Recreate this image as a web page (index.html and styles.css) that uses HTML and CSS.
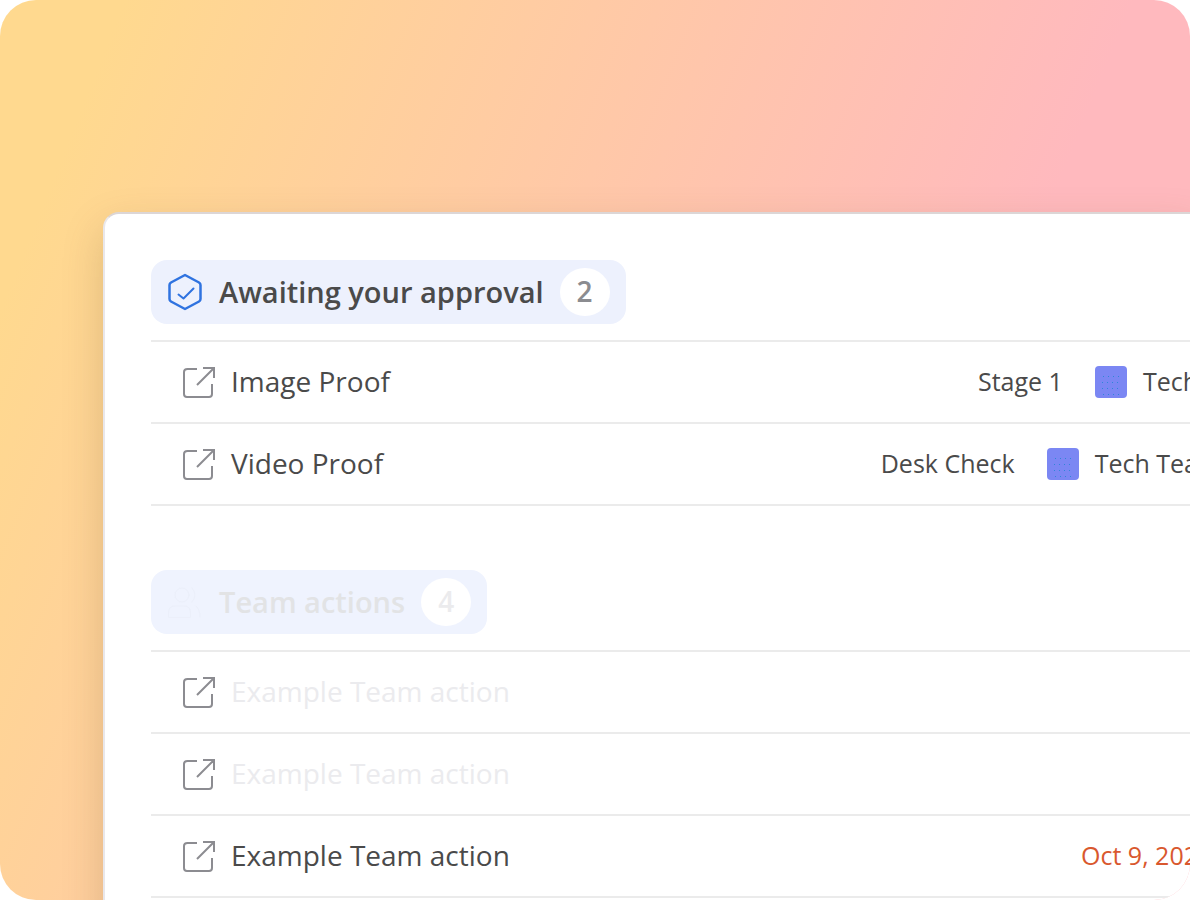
FILE: index.html
```html
<!DOCTYPE html>
<html lang="en">
<head>
  <meta charset="UTF-8">
  <meta name="viewport" content="width=device-width, initial-scale=1.0">
  <title>Awaiting your approval</title>
  <link rel="stylesheet" href="styles.css">
</head>
<body>
  <!-- Shared icons -->
  <svg class="sprite" aria-hidden="true">
    <symbol id="icon-open" viewBox="0 0 34 34">
      <path d="M15 4H5.500Q2 4 2 7V29Q2 32 5 32H27Q30 32 30 29V19" />
      <path d="M21 3H32V13M31.500 3.500L15 20" />
    </symbol>
    <symbol id="icon-dots" viewBox="0 0 32 32">
      <path d="M8 10.500H24M7 16.500H27M7 22.500H24M8 28.500H24" />
    </symbol>
  </svg>

  <main class="stage">
    <div class="card">
      <!-- Approvals -->
      <section class="section">
        <h2 class="pill">
          <svg class="pill-icon" viewBox="0 0 36 40" aria-hidden="true">
            <path d="M18 3L32 10.500Q33.500 11.500 33.500 13V27Q33.500 28.500 32 29.500L18 37L4 29.500Q2.500 28.500 2.500 27V13Q2.500 11.500 4 10.500Z" />
            <path class="tick" d="M11.500 22.500L16.500 26.500L26.500 16.500" />
          </svg>
          <span class="pill-title">Awaiting your approval</span>
          <span class="count">2</span>
        </h2>
        <ul class="rows">
          <li class="row">
            <a class="row-link" href="#"><svg class="open-icon" aria-hidden="true"><use href="#icon-open" /></svg><span class="label">Image Proof</span></a>
            <span class="meta">Stage 1</span>
            <svg class="swatch" aria-hidden="true"><use href="#icon-dots" /></svg>
            <span class="meta">Tech</span>
          </li>
          <li class="row">
            <a class="row-link" href="#"><svg class="open-icon" aria-hidden="true"><use href="#icon-open" /></svg><span class="label">Video Proof</span></a>
            <span class="meta">Desk Check</span>
            <svg class="swatch" aria-hidden="true"><use href="#icon-dots" /></svg>
            <span class="meta">Tech Tea</span>
          </li>
        </ul>
      </section>

      <!-- Team actions -->
      <section class="section">
        <h2 class="pill pill-faded">
          <svg class="pill-icon" viewBox="0 0 36 40" aria-hidden="true">
            <circle cx="15" cy="13" r="7" />
            <path d="M1.500 35V31Q1.500 24 8 24H17Q23.500 24 23.500 31V35ZM25 6Q31 13 25 20M29 24Q33 27 33 35" />
          </svg>
          <span class="pill-title">Team actions</span>
          <span class="count">4</span>
        </h2>
        <ul class="rows">
          <li class="row row-faded">
            <a class="row-link" href="#"><svg class="open-icon" aria-hidden="true"><use href="#icon-open" /></svg><span class="label">Example Team action</span></a>
          </li>
          <li class="row row-faded">
            <a class="row-link" href="#"><svg class="open-icon" aria-hidden="true"><use href="#icon-open" /></svg><span class="label">Example Team action</span></a>
          </li>
          <li class="row">
            <a class="row-link" href="#"><svg class="open-icon" aria-hidden="true"><use href="#icon-open" /></svg><span class="label">Example Team action</span></a>
            <time class="meta due">Oct 9, 202</time>
          </li>
        </ul>
      </section>
    </div>
  </main>
</body>
</html>
```
FILE: styles.css
```css
* {
  box-sizing: border-box;
}

body {
  margin: 0;
  background: #fff;
  color: #4a4a4a;
  font-family: "Open Sans", "Noto Sans", sans-serif;
  overflow: hidden;
}

.sprite {
  display: none;
}

.stage {
  height: 100vh;
  padding: 212px 0 0 103px;
  overflow: hidden;
  border-radius: 36px;
  background: linear-gradient(112deg, #ffd98f 8%, #ffb9be 73%);
}

/* The card runs off the right and bottom edges */
.card {
  min-height: 100%;
  margin-right: -8px;
  padding: 46px 0 0 46px;
  border: 2px solid #e9e7ea;
  border-right: 0;
  border-top-color: #dcd6d6;
  border-radius: 16px 0 0 0;
  background: #fff;
  box-shadow: 0 16px 40px rgba(110, 90, 30, 0.22);
}

.section {
  margin-bottom: 64px;
}

.pill {
  display: inline-flex;
  align-items: center;
  gap: 16px;
  height: 64px;
  margin: 0 0 16px;
  padding: 0 16px;
  border-radius: 16px;
  background: #edf1fd;
  font-size: 29px;
  font-weight: 600;
  vertical-align: top;
}

.pill-icon {
  width: 36px;
  height: 40px;
  fill: none;
  stroke: #2f73e0;
  stroke-width: 2.5;
  stroke-linecap: round;
  stroke-linejoin: round;
}

.tick {
  stroke-width: 2;
}

.pill-title,
.label,
.meta {
  padding-bottom: 2px;
}

.count {
  width: 50px;
  padding-bottom: 2px;
  border-radius: 50%;
  background: #fff;
  color: #8b8c90;
  font-size: 28px;
  line-height: 46px;
  text-align: center;
}

.pill-faded {
  background: #eff3fe;
  color: #e2e3e5;
}

.pill-faded .pill-icon {
  stroke: #ebeffa;
  stroke-width: 1;
}

.pill-faded .count {
  color: #ebebed;
}

.rows {
  margin: 0;
  padding: 0;
  border-top: 2px solid #ebebeb;
  list-style: none;
}

.row {
  display: flex;
  align-items: center;
  height: 82px;
  padding-left: 31px;
  border-bottom: 2px solid #ebebeb;
  white-space: nowrap;
}

.row-link {
  display: flex;
  align-items: center;
  gap: 15px;
  margin-right: auto;
  color: inherit;
  font-size: 28px;
  text-decoration: none;
}

.row-faded .row-link {
  color: #ebebee;
}

.open-icon {
  width: 34px;
  height: 34px;
  fill: none;
  stroke: #8c8c91;
  stroke-width: 2;
}

.meta {
  font-size: 25px;
}

.swatch {
  width: 32px;
  height: 32px;
  margin: 0 16px 0 32px;
  border-radius: 4px;
  background: #7b87f3;
  stroke: #2f86d8;
  stroke-width: 1;
  stroke-dasharray: 1 4;
}

.due {
  color: #d9582e;
}
```
